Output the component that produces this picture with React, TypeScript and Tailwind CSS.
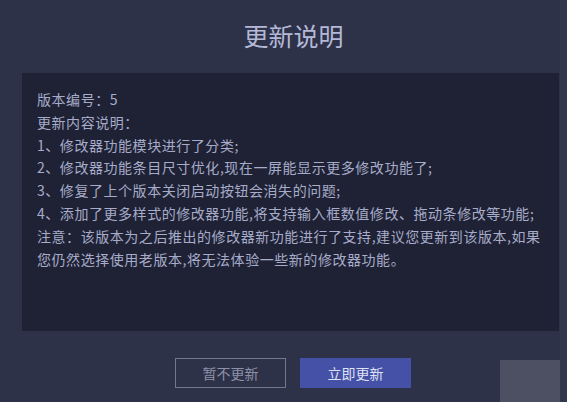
export default function App() {
  const lines = [
    "版本编号：5",
    "更新内容说明：",
    "1、修改器功能模块进行了分类;",
    "2、修改器功能条目尺寸优化,现在一屏能显示更多修改功能了;",
    "3、修复了上个版本关闭启动按钮会消失的问题;",
    "4、添加了更多样式的修改器功能,将支持输入框数值修改、拖动条修改等功能;",
    "注意：该版本为之后推出的修改器新功能进行了支持,建议您更新到该版本,如果",
    "您仍然选择使用老版本,将无法体验一些新的修改器功能。",
  ]

  return (
    <div
      className="relative w-[567px] h-[402px] overflow-hidden bg-[#2e3248]"
      style={{ fontFamily: '"Noto Sans CJK SC", "Noto Sans", sans-serif' }}
    >
      <div className="flex flex-col ml-[22px] w-[537px]">
        <div className="h-[73px] flex items-center justify-center pl-[6px] pb-[2px]">
          <span className="text-[25px] text-[#b4b9d8] leading-none">更新说明</span>
        </div>

        <div className="h-[258px] bg-[#1f2234] pl-[15px] pr-2 pt-[15px]">
          {lines.map((l, i) => (
            <div
              key={i}
              className="text-[14px] tracking-[0.55px] leading-[22.8px] text-[#a7acca] whitespace-nowrap"
            >
              {l}
            </div>
          ))}
        </div>

        <div className="flex justify-center gap-[14px] pt-[27px] pl-[5px]">
          <button className="w-[111px] h-[30px] border border-[#72778f] text-[14px] text-[#8d91a8] bg-transparent">
            暂不更新
          </button>
          <button className="w-[111px] h-[30px] bg-[#4551a6] text-[14px] text-[#dfe2f5]">
            立即更新
          </button>
        </div>
      </div>

      <div className="absolute right-0 top-0 w-[7px] h-full bg-[#33374d]" />
      <div className="absolute left-[500px] top-[360px] w-[60px] h-[42px] bg-[#6a6d7b] opacity-50" />
    </div>
  )
}
